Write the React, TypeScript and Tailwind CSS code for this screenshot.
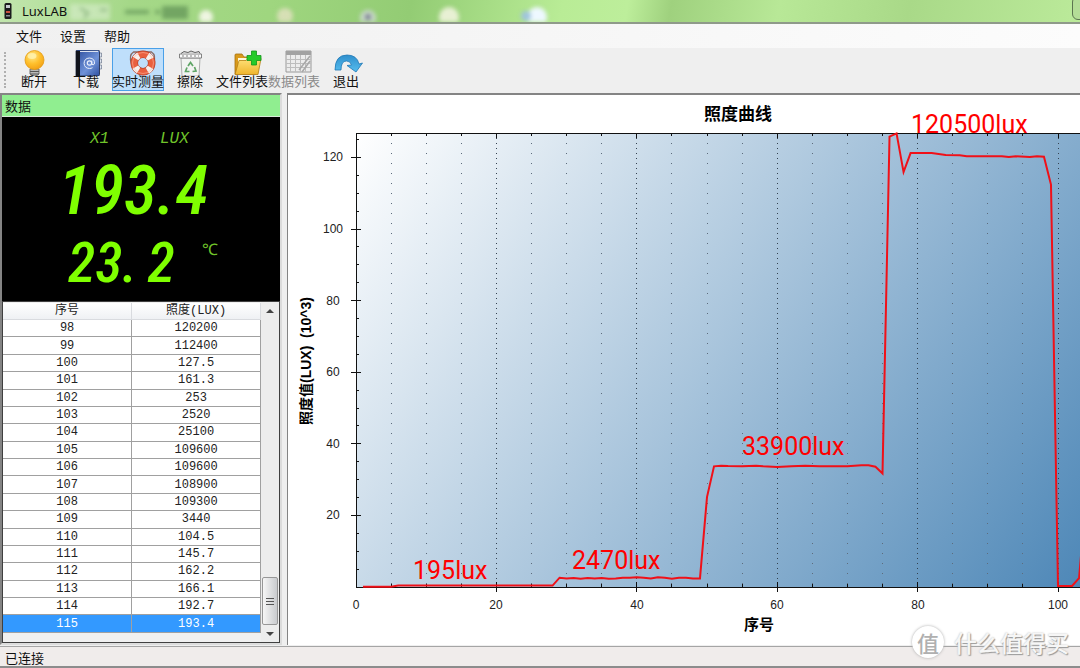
import React from 'react'
import clsx from 'clsx'

type Tool = {
    label: string,
    icon: React.ReactNode,
    active?: boolean,
    disabled?: boolean
}

const menus = ['文件', '设置', '帮助'];

const rows: [number, string][] = [
    [98, '120200'], [99, '112400'], [100, '127.5'], [101, '161.3'], [102, '253'], [103, '2520'],
    [104, '25100'], [105, '109600'], [106, '109600'], [107, '108900'], [108, '109300'], [109, '3440'],
    [110, '104.5'], [111, '145.7'], [112, '162.2'], [113, '166.1'], [114, '192.7'], [115, '193.4'],
];

// [sample number, illuminance in klux]
const series: [number, number][] = [
    [1, 0.1], [5, 0.1], [6, 0.4], [28, 0.4], [29, 2.6], [30, 2.4], [31, 2.5], [32, 2.3], [33, 2.5], [34, 2.4],
    [35, 2.5], [36, 2.3], [37, 2.4], [38, 2.6], [39, 2.6], [40, 2.7], [41, 2.6], [42, 2.4], [43, 2.7], [44, 2.6],
    [45, 2.3], [46, 2.6], [47, 2.6], [48, 2.4], [49, 2.4], [50, 25.1], [51, 33.7], [52, 33.9], [53, 33.8], [55, 33.7],
    [57, 33.9], [58, 33.7], [60, 33.5], [62, 33.7], [64, 33.9], [66, 33.7], [70, 33.7], [72, 34], [73, 34], [74, 33.6],
    [75, 31.7], [76, 125.8], [77, 126.7], [78, 115.9], [79, 121.2], [82, 121.2], [84, 120.7], [86, 120.6],
    [87, 120.3], [92, 120.3], [93, 120.1], [94, 120.3], [96, 120.1], [97, 120.3], [98, 120.2], [99, 112.4],
    [100, 0.3], [102, 0.3], [103, 2.5], [104, 25.1],
];

const notes = [
    {text: '195lux', x: 125, y: 484},
    {text: '2470lux', x: 284, y: 474},
    {text: '33900lux', x: 454, y: 360},
    {text: '120500lux', x: 623, y: 38},
];

const LEFT = 68;
const TOP = 38;
const BOTTOM = 492;
const RIGHT = 840;

const px = (n: number) => LEFT + n * 7.02;
const py = (v: number) => BOTTOM - v * 3.58;

const tools: Tool[] = [
    {
        label: '断开',
        icon: (
            <>
                <path d="M22 19h9v5q-4 4-9 0z" fill="#b9b9b9" stroke="#6d6d6d" strokeWidth="1"/>
                <path d="M22 21.500h9M22 24h9" stroke="#555"/>
                <circle cx="26.500" cy="10" r="9.500" fill="url(#bulb)" stroke="#e39a12" strokeWidth=".8"/>
                <ellipse cx="24" cy="6" rx="4.500" ry="3" fill="#fff3b0" opacity=".8"/>
            </>
        ),
    },
    {
        label: '下载',
        icon: (
            <>
                <path d="M39 3h2.500v4H39zM39 9h2.500v4H39zM39 15h2.500v4H39z" fill="#dfe5ef" stroke="#59647c" strokeWidth=".6"/>
                <path d="M16 1q0-1 2-1h20q1.500 0 1.500 1.500v23q0 1.500-1.500 1.500H16z" fill="url(#book)" stroke="#1a2340" strokeWidth=".8"/>
                <path d="M16 1h4v25h-4z" fill="#10131c"/>
                <path d="M20 1.500h18" stroke="#dde3f0"/>
                <circle cx="29.500" cy="13" r="2.200" fill="none" stroke="#e8eefb" strokeWidth="1.200"/>
                <path d="M31.800 10.500v3.500q1.200 1.800 2.600 0 .8-5.600-4.900-6-5.400.3-5.400 5.500.5 4.800 5.400 5 1.700 0 3-.8" fill="none" stroke="#e8eefb" strokeWidth="1"/>
            </>
        ),
    },
    {
        label: '实时测量',
        active: true,
        icon: (
            <>
                <path d="M19.500 14q-3-9 2-12h18q5 3 2 12" fill="none" stroke="#8a6a62" strokeWidth="1.300"/>
                <circle cx="31" cy="13" r="8.700" fill="none" stroke="#a93a26" strokeWidth="7.500"/>
                <circle cx="31" cy="13" r="8.700" fill="none" stroke="#e9603f" strokeWidth="6.300"/>
                <circle cx="31" cy="13" r="8.700" fill="none" stroke="#f6f1ee" strokeWidth="6.600" strokeDasharray="4.600 9.066" strokeDashoffset="-4.500"/>
                <circle cx="31" cy="13" r="10.500" fill="none" stroke="#ffb79f" strokeWidth=".8" opacity=".7"/>
            </>
        ),
    },
    {
        label: '擦除',
        icon: (
            <>
                <path d="M17 8h19l-1 18H18z" fill="#f2f3f2" stroke="#a5a7a6" strokeWidth=".9"/>
                <path d="M15.500 4h22v4h-22z" fill="#fafafa" stroke="#777" strokeWidth=".9"/>
                <path d="M17 3.500l3-2 4 1 3-1.500 4 1.500 4-1 1 2" fill="#d8d8d8" stroke="#555" strokeWidth=".9"/>
                <path d="M18 6h17" stroke="#777" strokeWidth=".9" strokeDasharray="2 2"/>
                <path d="M24 16l2.500-3.500 2.500 3.500M30.500 17l1.500 4-3.500.5M25.500 21.500h-4l1.500-4" fill="none" stroke="#5fa566" strokeWidth="1.700"/>
            </>
        ),
    },
    {
        label: '文件列表',
        icon: (
            <>
                <path d="M19 24V5q0-1 1-1h6l2 3h12v17z" fill="#d99a1b" stroke="#a56e0e" strokeWidth=".8"/>
                <path d="M22 8h17v6H22z" fill="#fff7d8"/>
                <path d="M19 24.500l4-14h7l2-2h13l-3 16z" fill="url(#folder)" stroke="#b57d12" strokeWidth=".8"/>
                <path d="M35.500 1h5v4.500h4.500v5h-4.500v4.500h-5v-4.500H31v-5h4.500z" fill="#25cb2a" stroke="#12961a" strokeWidth=".8"/>
            </>
        ),
    },
    {
        label: '数据列表',
        disabled: true,
        icon: (
            <>
                <path d="M18 1h25v21H18z" fill="#ececec" stroke="#9a9a9a"/>
                <path d="M18 1h25v4H18z" fill="#a2a2a2"/>
                <path d="M18 9.500h25M18 13.500h25M18 17.500h25M22.500 5v17M27.500 5v17M32.500 5v17M37.500 5v17" stroke="#bdbdbd"/>
                <path d="M31 20L42 6M34 22l8-11" stroke="#a8a8a8" strokeWidth="1.500"/>
            </>
        ),
    },
    {
        label: '退出',
        icon: (
            <path d="M15 20Q15 5 27 5q10 0 12 9l3.500-1-6.500 9-9-6.500 4.500-.5q-1-4-5-4-5.500 0-5.500 9z" fill="url(#arrow)" stroke="#1d77b5" strokeWidth=".8"/>
        ),
    },
];

const IconDefs = () => (
    <svg className="absolute w-0 h-0" aria-hidden="true">
        <defs>
            <radialGradient id="bulb" cx=".4" cy=".3" r=".8">
                <stop offset="0" stopColor="#ffe98c"/>
                <stop offset=".5" stopColor="#ffc02c"/>
                <stop offset="1" stopColor="#f09a10"/>
            </radialGradient>
            <linearGradient id="book" x1="0" y1="0" x2="1" y2="1">
                <stop offset="0" stopColor="#2b4c9c"/>
                <stop offset=".6" stopColor="#6f92d8"/>
                <stop offset="1" stopColor="#2d4f9f"/>
            </linearGradient>
            <linearGradient id="folder" x1="0" y1="0" x2="0" y2="1">
                <stop offset="0" stopColor="#ffe27a"/>
                <stop offset="1" stopColor="#efb52d"/>
            </linearGradient>
            <linearGradient id="arrow" x1="0" y1="0" x2="0" y2="1">
                <stop offset="0" stopColor="#2f8fcd"/>
                <stop offset="1" stopColor="#56bdee"/>
            </linearGradient>
        </defs>
    </svg>
);

const TitleBar = () => (
    <header className="relative h-6 shrink-0 overflow-hidden border-b-2 border-[#8f9a8a] bg-[linear-gradient(100deg,#c2e6ae_0%,#a5d888_12%,#9fd67f_25%,#93cc74_38%,#b9ec96_52%,#bdee9b_58%,#9fd17e_62%,#b8e897_72%,#a9d988_84%,#bbea9a_100%)]">
        {/* Desktop seen through the glass frame */}
        <svg className="absolute inset-0 w-full h-full blur-[2px]" aria-hidden="true">
            <path d="M70 4h40v16H70z" fill="#e2f2da" opacity=".5"/>
            <path d="M80 8l8 5-4 5M100 10h7" stroke="#86b07a" strokeWidth="2" fill="none"/>
            <path d="M125 12h24M155 12h5M164 8h22v9h-22z" stroke="#5f9155" strokeWidth="4" fill="#5f9155" opacity=".7"/>
            <circle cx="206" cy="17" r="7" fill="#eff5e2"/>
            <circle cx="285" cy="16" r="8" fill="#d6dfb5"/>
            <circle cx="368" cy="18" r="8" fill="#c9d9c9"/>
            <circle cx="368" cy="17" r="3" fill="#777b90"/>
            <circle cx="449" cy="17" r="10" fill="#e8f0d4"/>
            <circle cx="537" cy="17" r="10" fill="#eef8ff"/>
            <circle cx="526" cy="16" r="5" fill="#9fc4dc"/>
        </svg>
        <div className="relative flex h-full items-center gap-2.5 pl-1">
            <svg className="w-2 h-4" viewBox="0 0 8 16" aria-hidden="true">
                <rect x="0.500" y="0" width="7" height="16" rx="1.500" fill="#1b1b1d"/>
                <rect x="2" y="2" width="4" height="3" fill="#c7ccd0"/>
                <rect x="2" y="8" width="4" height="2" fill="#c8503f"/>
                <rect x="2" y="12" width="4" height="1.500" fill="#8b9196"/>
            </svg>
            <h1 className="text-[13px] leading-4 text-[#111]">LuxLAB</h1>
        </div>
        <button type="button" aria-label="最小化"
                className="absolute -right-6 -top-1 h-6 w-8 rounded-md border border-[#5c7450] bg-[#b4dd97]"></button>
    </header>
);

const ToolButton = ({label, icon, active, disabled}: Tool) => (
    <button
        type="button"
        disabled={disabled}
        className={clsx(
            'flex h-[43px] w-[52px] flex-col items-center border',
            active ? 'border-[#4aa0e8] bg-[#bfdffb]' : 'border-transparent',
            disabled ? 'text-[#8a8a8a]' : 'text-[#111]'
        )}
    >
        <svg className="mt-px h-[26px] w-[52px] shrink-0" viewBox="0 0 52 26" aria-hidden="true">{icon}</svg>
        <span className="relative -mt-1 whitespace-nowrap text-[13px] leading-[18px]">{label}</span>
    </button>
);

const Lcd = () => (
    <section className="h-[184px] shrink-0 overflow-hidden bg-black pt-3 text-[#7fff00]">
        <div className="flex pl-[88px] font-['Liberation_Mono','Noto_Sans_CJK_SC',monospace] text-base leading-5 italic text-[#70c42a]">
            <span className="w-[70px]">X1</span>
            <span>LUX</span>
        </div>
        <div className="flex pl-[56px] font-['Roboto_Condensed','Liberation_Sans_Narrow',sans-serif] text-[68px] leading-[84px] font-medium italic">
            <span>193.</span>
            <span>4</span>
        </div>
        <div className="flex pl-[66px]">
            <div className="flex w-[134px] gap-2.5 font-['Roboto_Condensed','Liberation_Sans_Narrow',sans-serif] text-[56px] leading-[60px] font-medium italic">
                <span>23.</span>
                <span>2</span>
            </div>
            <span className="pt-1 text-base leading-6 text-[#70c42a]">℃</span>
        </div>
    </section>
);

const DataTable = () => (
    <div className="flex min-h-0 flex-1 border border-[#404040] bg-[#f0f0f0]">
        <div className="flex-1 pt-px pb-[9px]">
            <table className="h-full w-full table-fixed border-collapse text-center font-['Liberation_Mono','Noto_Sans_CJK_SC',monospace] text-[12px] leading-4 text-[#222]">
                <thead>
                    <tr className="bg-linear-to-b from-white to-[#eef0f3]">
                        <th className="border-r border-b border-[#d9dbdf] p-0 font-normal">序号</th>
                        <th className="border-r border-b border-[#d9dbdf] p-0 font-normal">照度(LUX)</th>
                    </tr>
                </thead>
                <tbody>
                    {rows.map(([n, lux]) => (
                        <tr key={n} className={n === 115 ? 'bg-[#3399ff] text-white' : 'bg-white'}>
                            <td className="border-r border-b border-[#a0a0a0] p-0">{n}</td>
                            <td className="border-r border-b border-[#a0a0a0] p-0">{lux}</td>
                        </tr>
                    ))}
                </tbody>
            </table>
        </div>
        {/* Scroll bar */}
        <div className="flex w-[18px] flex-col items-center bg-[#ededed] px-px">
            <button type="button" aria-label="向上滚动" className="flex h-[17px] w-full items-center justify-center">
                <svg className="w-2 h-1" viewBox="0 0 8 4" aria-hidden="true"><path d="M0 4l4-4 4 4z" fill="#444"/></svg>
            </button>
            <div className="flex-1"></div>
            <div className="flex h-12 w-full flex-col items-center justify-center gap-0.5 rounded-xs border border-[#979797] bg-linear-to-r from-[#f6f6f6] to-[#c9cbce]">
                <span className="h-px w-2 bg-[#555]"></span>
                <span className="h-px w-2 bg-[#555]"></span>
                <span className="h-px w-2 bg-[#555]"></span>
            </div>
            <button type="button" aria-label="向下滚动" className="flex h-[17px] w-full items-center justify-center">
                <svg className="w-2 h-1" viewBox="0 0 8 4" aria-hidden="true"><path d="M0 0h8L4 4z" fill="#444"/></svg>
            </button>
        </div>
    </div>
);

const Chart = () => {
    const xMinor = Array.from({length: 21}, (_, i) => (i + 1) * 5);
    const yMinor = Array.from({length: 25}, (_, i) => (i + 1) * 5);

    return (
        <svg className="block h-full w-full" viewBox="0 0 792 550" preserveAspectRatio="xMinYMin slice"
             fontFamily="'Liberation Sans', 'Noto Sans CJK SC', sans-serif">
            <defs>
                <linearGradient id="plot" gradientUnits="userSpaceOnUse" x1={LEFT} y1={TOP} x2={LEFT + 724} y2={TOP + 520}>
                    <stop offset="0" stopColor="#ffffff"/>
                    <stop offset="1" stopColor="#4682b4"/>
                </linearGradient>
            </defs>
            <text x="450" y="25" textAnchor="middle" fontSize="17" fontWeight="700">照度曲线</text>
            <text x="471" y="535" textAnchor="middle" fontSize="15" fontWeight="700">序号</text>
            <text x="23" y="266" textAnchor="middle" fontSize="14" fontWeight="700" xmlSpace="preserve"
                  transform="rotate(-90 23 266)">照度值(LUX)  (10^3)</text>

            <rect x={LEFT} y={TOP} width={RIGHT - LEFT} height={BOTTOM - TOP} fill="url(#plot)"/>
            <g shapeRendering="crispEdges" stroke="#111">
                {xMinor.map((n) => {
                    const major = n % 20 === 0;
                    const x = Math.floor(px(n)) + 0.5;
                    return (
                        <g key={n}>
                            <path d={`M${x} ${TOP}V${BOTTOM}`} stroke={major ? '#33414f' : '#5d6c7c'}
                                  strokeDasharray={major ? '1 4' : '1 9'}/>
                            <path d={major ? `M${x} ${TOP}v5M${x} ${BOTTOM - 5}v10` : `M${x} ${TOP}v3M${x} ${BOTTOM - 3}v3`}/>
                        </g>
                    );
                })}
                {yMinor.map((v) => (
                    <path key={v} d={v % 20 === 0 ? `M${LEFT - 5} ${Math.floor(py(v)) + 0.5}h10` : `M${LEFT} ${Math.floor(py(v)) + 0.5}h3`}/>
                ))}
                <path d={`M${RIGHT} ${TOP + 0.5}H${LEFT + 0.5}V${BOTTOM + 0.5}H${RIGHT}`} fill="none"/>
            </g>
            <g fontSize="12" fill="#222" textAnchor="middle">
                {[20, 40, 60, 80, 100, 120].map((v) => (
                    <text key={v} x="45" y={Math.round(py(v)) + 4}>{v}</text>
                ))}
                {[0, 20, 40, 60, 80, 100].map((n) => (
                    <text key={n} x={Math.round(px(n))} y="514">{n}</text>
                ))}
            </g>
            <polyline points={series.map(([n, v]) => `${px(n)},${py(v)}`).join(' ')} fill="none" stroke="#f01018"
                      strokeWidth="2"/>
            <g fontFamily="Roboto, sans-serif" fontSize="25" fill="#ff0000">
                {notes.map((note) => (
                    <text key={note.text} x={note.x} y={note.y}>{note.text}</text>
                ))}
            </g>
        </svg>
    );
};

const App = () => {
    return (
        <div className="relative flex h-screen flex-col overflow-hidden bg-[#efefef] font-['Noto_Sans','Noto_Sans_CJK_SC',sans-serif]">
            <IconDefs/>
            <TitleBar/>

            <nav className="flex h-6 shrink-0 items-center bg-linear-to-r from-[#f0f0f0] to-[#fcfcfc] pl-[7px] text-[13px] leading-4 text-[#111]">
                {menus.map((m) => (
                    <button key={m} type="button" className="px-[9px]">{m}</button>
                ))}
            </nav>

            <div className="flex h-[45px] shrink-0 items-start pl-1">
                <div className="mt-1 mr-0.5 h-9 border-l-2 border-dotted border-[#b0b0b0]"></div>
                {tools.map((tool) => (
                    <ToolButton key={tool.label} {...tool}/>
                ))}
            </div>

            <main className="flex min-h-0 flex-1 gap-[5px] pb-px">
                <aside className="flex w-[282px] shrink-0 flex-col border-2 border-[#848484] border-r-[#dcdcdc] border-b-[#dcdcdc]">
                    <h2 className="h-[22px] shrink-0 border-b border-[#d8ead8] bg-[#90ee90] pl-[3px] text-[13px] leading-[22px] text-[#111]">数据</h2>
                    <Lcd/>
                    <DataTable/>
                </aside>
                <section className="min-w-0 flex-1 overflow-hidden border-t-2 border-l border-[#848484] bg-white">
                    <Chart/>
                </section>
            </main>

            <footer className="h-[22px] shrink-0 border-t border-b-2 border-t-[#a5a5a5] border-b-[#8c8c8c] bg-[#f0eceb] pl-[5px] text-[13px] leading-[22px] text-[#111]">
                已连接
            </footer>

            {/* Watermark */}
            <div className="pointer-events-none absolute right-[11px] bottom-[10px] flex items-center gap-2.5 font-['Noto_Sans_CJK_SC',sans-serif]">
                <span className="flex h-8 w-8 items-center justify-center rounded-full bg-white text-[22px] leading-8 font-medium text-[#b0b0b0] shadow-[0_0_3px_#aaa]">值</span>
                <span className="text-[23px] leading-8 font-medium text-[#f6f6f6] [text-shadow:1px_1px_1px_#999,0_0_2px_#bbb]">什么值得买</span>
            </div>
        </div>
    );
};

export default App;
